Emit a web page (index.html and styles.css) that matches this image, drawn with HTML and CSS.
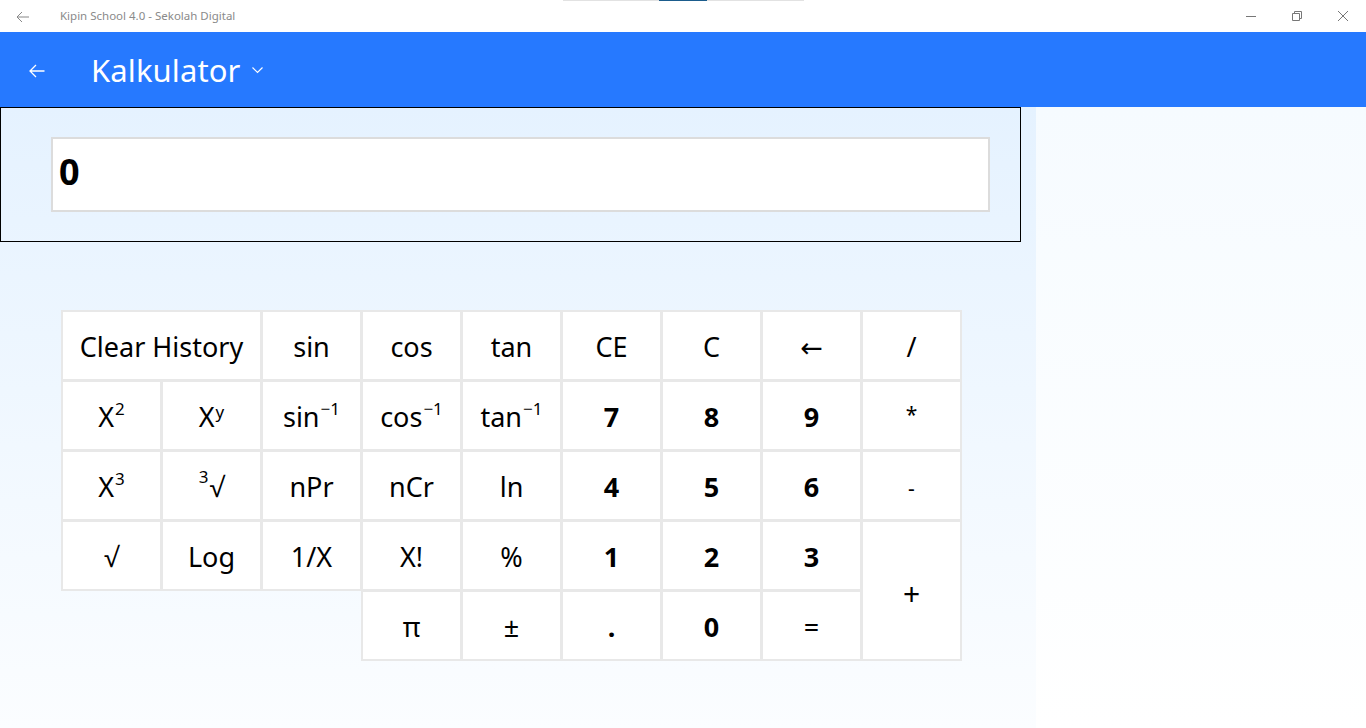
FILE: index.html
```html
<!DOCTYPE html>
<html lang="id">
<head>
    <meta charset="UTF-8">
    <title>Kipin School 4.0 - Sekolah Digital</title>
    <link rel="stylesheet" href="styles.css">
</head>
<body>
    <div class="titlebar">
        <div class="tb-back">
            <svg width="14" height="12" viewBox="0 0 14 12"><path d="M13 6H1M6 1L1 6l5 5" fill="none" stroke="#888" stroke-width="1"/></svg>
        </div>
        <div class="tb-title">Kipin School 4.0 - Sekolah Digital</div>
        <div class="tb-strip"><span></span></div>
        <div class="tb-controls">
            <div class="ctl"><svg width="10" height="10" viewBox="0 0 10 10"><path d="M0 5.5h10" stroke="#777" stroke-width="1"/></svg></div>
            <div class="ctl"><svg width="10" height="10" viewBox="0 0 10 10"><path d="M0.5 2.5h7v7h-7zM2.5 2.5V0.5h7v7h-2" fill="none" stroke="#777" stroke-width="1"/></svg></div>
            <div class="ctl"><svg width="10" height="10" viewBox="0 0 10 10"><path d="M0 0L10 10M10 0L0 10" stroke="#777" stroke-width="1"/></svg></div>
        </div>
    </div>

    <div class="header">
        <div class="hd-back">
            <svg width="16" height="14" viewBox="0 0 16 14"><path d="M15.5 7H1M7 1L1 7l6 6" fill="none" stroke="#fff" stroke-width="1.3"/></svg>
        </div>
        <div class="hd-title">Kalkulator</div>
        <svg class="hd-chev" width="11" height="7" viewBox="0 0 11 7"><path d="M0.5 0.5L5.5 5.5L10.5 0.5" fill="none" stroke="#fff" stroke-width="1.2"/></svg>
    </div>

    <div class="main">
        <div class="calc">
            <div class="display">
                <div class="screen">0</div>
            </div>
            <div class="keys">
                <div class="k span2">Clear History</div>
                <div class="k">sin</div>
                <div class="k">cos</div>
                <div class="k">tan</div>
                <div class="k">CE</div>
                <div class="k">C</div>
                <div class="k">&larr;</div>
                <div class="k">/</div>

                <div class="k">X<sup>2</sup></div>
                <div class="k">X<sup class="y">y</sup></div>
                <div class="k">sin<sup>&minus;1</sup></div>
                <div class="k">cos<sup>&minus;1</sup></div>
                <div class="k">tan<sup>&minus;1</sup></div>
                <div class="k num">7</div>
                <div class="k num">8</div>
                <div class="k num">9</div>
                <div class="k small">*</div>

                <div class="k">X<sup>3</sup></div>
                <div class="k"><sup class="pre">3</sup>&radic;</div>
                <div class="k">nPr</div>
                <div class="k">nCr</div>
                <div class="k">ln</div>
                <div class="k num">4</div>
                <div class="k num">5</div>
                <div class="k num">6</div>
                <div class="k small minus">-</div>

                <div class="k">&radic;</div>
                <div class="k">Log</div>
                <div class="k">1/X</div>
                <div class="k">X!</div>
                <div class="k">%</div>
                <div class="k num">1</div>
                <div class="k num">2</div>
                <div class="k num">3</div>
                <div class="k plus">+</div>

                <div class="k col4">&pi;</div>
                <div class="k">&plusmn;</div>
                <div class="k num">.</div>
                <div class="k num">0</div>
                <div class="k">=</div>
            </div>
        </div>
        <div class="side"></div>
    </div>
</body>
</html>
```

FILE: styles.css
```css
html, body {
    margin: 0;
    padding: 0;
}
body {
    width: 1366px;
    height: 728px;
    overflow: hidden;
    font-family: "Noto Sans", "Open Sans", "DejaVu Sans", sans-serif;
    color: #000;
    display: flex;
    flex-direction: column;
}
.titlebar {
    position: relative;
    height: 32px;
    background-color: #fff;
    display: flex;
    align-items: center;
}
.tb-back {
    width: 46px;
    display: flex;
    justify-content: center;
    padding-top: 1px;
}
.tb-title {
    margin-left: 14px;
    font-size: 11.5px;
    color: #8a8a8a;
    padding-bottom: 2px;
}
.tb-strip {
    position: absolute;
    top: 0;
    left: 563px;
    width: 241px;
    height: 1px;
    background-color: #e2e2e2;
}
.tb-strip span {
    display: block;
    margin-left: 96px;
    width: 48px;
    height: 1px;
    background-color: #1b5c8c;
}
.tb-controls {
    margin-left: auto;
    display: flex;
    height: 32px;
}
.ctl {
    width: 46px;
    display: flex;
    align-items: center;
    justify-content: center;
}
.header {
    height: 75px;
    background-color: #2679ff;
    display: flex;
    align-items: center;
    color: #fff;
}
.hd-back {
    width: 74px;
    display: flex;
    justify-content: center;
    padding-top: 2px;
}
.hd-title {
    margin-left: 17px;
    font-size: 31px;
    letter-spacing: 0.1px;
}
.hd-chev {
    margin-left: 12px;
    margin-top: 2px;
}
.main {
    flex: 1;
    display: flex;
}
.calc {
    width: 1036px;
    background: linear-gradient(#e5f2ff, #fbfdff);
}
.side {
    flex: 1;
    background: linear-gradient(#f6fbff, #ffffff);
}
.display {
    border: 1px solid #000;
    padding: 29px 0 0 50px;
    box-sizing: border-box;
    width: 1021px;
    height: 135px;
}
.screen {
    width: 939px;
    height: 75px;
    box-sizing: border-box;
    border: 2px solid #dcdcdc;
    background-color: #fff;
    font-size: 36px;
    font-weight: bold;
    line-height: 66px;
    padding-left: 6px;
}
.keys {
    margin: 70px 0 0 63px;
    display: grid;
    grid-template-columns: repeat(9, 97px);
    grid-auto-rows: 67px;
    gap: 3px;
}
.k {
    background-color: #fff;
    box-shadow: 0 0 0 2px #e8e8e8;
    display: flex;
    align-items: center;
    justify-content: center;
    font-size: 27px;
    padding-top: 1px;
    box-sizing: border-box;
}
.k sup {
    font-size: 17px;
    line-height: 0;
    position: relative;
    top: -7px;
    margin-left: 1px;
}
.k sup.y {
    top: -4px;
}
.k sup.pre {
    margin: 0 1px 0 0;
    top: -9px;
}
.span2 {
    grid-column: span 2;
}
.num {
    font-weight: bold;
}
.small {
    font-size: 21px;
    padding-bottom: 4px;
}
.small.minus {
    padding: 4px 0 0;
}
.plus {
    grid-row: span 2;
    font-size: 30px;
    padding: 6px 0 0;
}
.col4 {
    grid-column: 4;
}
```
